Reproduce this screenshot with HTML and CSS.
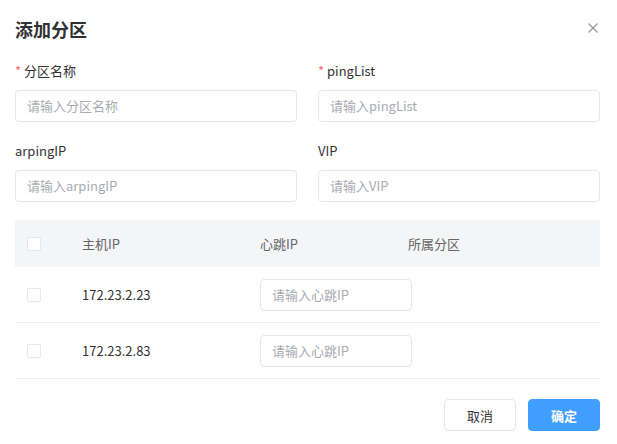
FILE: index.html
```html
<!DOCTYPE html>
<html lang="zh">
<head>
<meta charset="utf-8">
<link rel="stylesheet" href="styles.css">
</head>
<body>
<div class="dialog">
  <div class="header">
    <h1 class="title">添加分区</h1>
    <svg class="close" width="10" height="10" viewBox="0 0 10 10"><path d="M0.5 0.5L9.5 9.5M9.5 0.5L0.5 9.5" stroke="#909399" stroke-width="1.1" fill="none"/></svg>
  </div>
  <div class="form">
    <div class="field">
      <label class="label"><span class="req">*</span> 分区名称</label>
      <div class="input placeholder">请输入分区名称</div>
    </div>
    <div class="field">
      <label class="label"><span class="req">*</span> pingList</label>
      <div class="input placeholder">请输入pingList</div>
    </div>
    <div class="field">
      <label class="label">arpingIP</label>
      <div class="input placeholder">请输入arpingIP</div>
    </div>
    <div class="field">
      <label class="label">VIP</label>
      <div class="input placeholder">请输入VIP</div>
    </div>
  </div>
  <div class="table">
    <div class="row head">
      <div class="cell"><span class="checkbox"></span></div>
      <div class="cell">主机IP</div>
      <div class="cell">心跳IP</div>
      <div class="cell">所属分区</div>
    </div>
    <div class="row">
      <div class="cell"><span class="checkbox"></span></div>
      <div class="cell">172.23.2.23</div>
      <div class="cell"><div class="input small placeholder">请输入心跳IP</div></div>
      <div class="cell"></div>
    </div>
    <div class="row">
      <div class="cell"><span class="checkbox"></span></div>
      <div class="cell">172.23.2.83</div>
      <div class="cell"><div class="input small placeholder">请输入心跳IP</div></div>
      <div class="cell"></div>
    </div>
  </div>
  <div class="footer">
    <button class="btn">取消</button>
    <button class="btn primary">确定</button>
  </div>
</div>
</body>
</html>
```
FILE: styles.css
```css
* { box-sizing: border-box; }
html, body { margin: 0; padding: 0; background: #fff; }
body {
  font-family: "Noto Sans CJK SC", "Noto Sans", sans-serif;
  font-size: 13px;
  color: #333;
}
.dialog {
  width: 617px;
  height: 444px;
  padding: 0 17px 0 15px;
}
.header {
  height: 56px;
  display: flex;
  align-items: center;
  justify-content: space-between;
  padding-top: 1px;
}
.title {
  margin: 0;
  font-size: 18px;
  font-weight: 700;
  color: #303133;
}
.close { margin-right: 2px; margin-top: -2px; }
.form {
  display: grid;
  grid-template-columns: 282px 282px;
  column-gap: 21px;
  row-gap: 14px;
}
.field { display: flex; flex-direction: column; }
.label {
  height: 29px;
  line-height: 29px;
  font-size: 13px;
  color: #333;
  margin-bottom: 5px;
}
.req { color: #f56c6c; }
.input {
  height: 32px;
  border: 1px solid #e4e7ed;
  border-radius: 4px;
  padding: 0 11px;
  line-height: 30px;
  font-size: 13px;
}
.placeholder { color: #a8abb2; }
.table { margin-top: 18px; }
.row {
  display: grid;
  grid-template-columns: 55px 178px 148px 1fr;
  height: 56px;
  border-bottom: 1px solid #ebeef5;
  align-items: center;
}
.row.head {
  background: #f4f5f7;
  height: 47px;
  border-bottom: none;
  color: #666;
}
.cell { padding-left: 12px; display: flex; align-items: center; }
.checkbox {
  width: 14px;
  height: 14px;
  border: 1px solid #e4e7ed;
  border-radius: 2px;
  background: #fff;
  display: inline-block;
}
.input.small { flex: none; width: 152px; }
.row:not(.head) .cell:nth-child(3) { padding-left: 0; margin-left: 12px; }
.footer {
  display: flex;
  justify-content: flex-end;
  gap: 12px;
  margin-top: 20px;
}
.btn {
  width: 72px;
  height: 32px;
  border: 1px solid #e4e7ed;
  border-radius: 4px;
  background: #fff;
  color: #333;
  font-family: inherit;
  font-size: 13px;
  padding: 0;
}
.btn.primary {
  background: #409eff;
  border-color: #409eff;
  color: #fff;
  font-weight: 700;
}
```
